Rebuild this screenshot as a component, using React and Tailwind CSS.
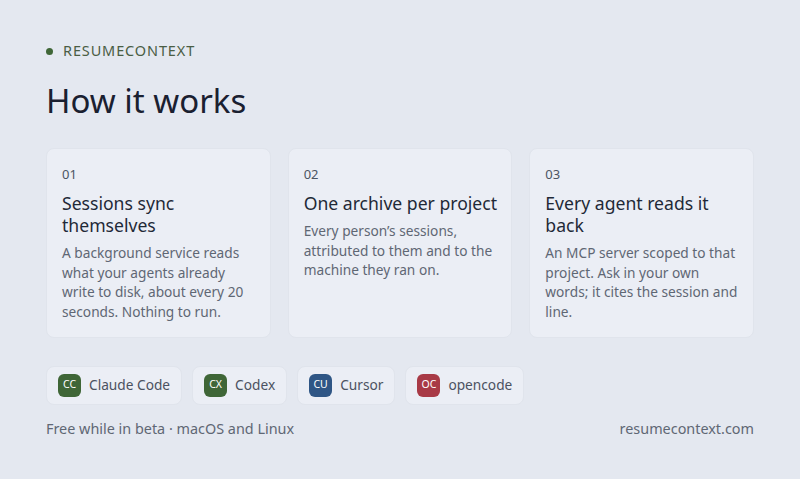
const steps = [
  {
    n: '01',
    title: 'Sessions sync themselves',
    body: 'A background service reads what your agents already write to disk, about every 20 seconds. Nothing to run.',
  },
  {
    n: '02',
    title: 'One archive per project',
    body: 'Every person\u2019s sessions, attributed to them and to the machine they ran on.',
  },
  {
    n: '03',
    title: 'Every agent reads it back',
    body: 'An MCP server scoped to that project. Ask in your own words; it cites the session and line.',
  },
]

const agents = [
  { code: 'CC', name: 'Claude Code', color: 'bg-[#3f6637]' },
  { code: 'CX', name: 'Codex', color: 'bg-[#3f6637]' },
  { code: 'CU', name: 'Cursor', color: 'bg-[#2f5685]' },
  { code: 'OC', name: 'opencode', color: 'bg-[#a83a46]' },
]

function StepCard({ n, title, body }) {
  return (
    <div className="bg-[#ebeef5] border border-[#e0e4ec] rounded-lg pl-[15px] pr-[13px] pt-[15px] pb-[15px]">
      <div className="text-[13px] leading-5 text-[#4b5563]">{n}</div>
      <h3 className="mt-2 text-[17.6px] leading-[22px] text-[#1f2937]">{title}</h3>
      <p className="mt-[7px] text-[13.7px] leading-[19.7px] text-[#5f6774]">{body}</p>
    </div>
  )
}

function AgentChip({ code, name, color }) {
  return (
    <div className="flex items-center gap-2 bg-[#ebeef5] border border-[#e0e4ec] rounded-lg px-[11px] h-[39px]">
      <span className={`${color} w-[23px] h-[23px] rounded-md flex items-center justify-center text-[10.5px] text-white`}>
        {code}
      </span>
      <span className="text-[13.7px] text-[#4b5261]">{name}</span>
    </div>
  )
}

export default function App() {
  return (
    <div
      className="min-h-screen w-full bg-[#e4e8f0] px-[46px] pt-[41px]"
      style={{ fontFamily: '"Noto Sans", "Open Sans", sans-serif' }}
    >
      {/* eyebrow */}
      <div className="flex items-center gap-[10px] h-5">
        <span className="w-[7px] h-[7px] rounded-full bg-[#3f6637]" />
        <span className="text-[14.5px] tracking-[0.06em] text-[#4a5d44]">RESUMECONTEXT</span>
      </div>

      <h1 className="mt-5 text-[33px] leading-10 text-[#1a2030]">How it works</h1>

      <div className="mt-[27px] grid grid-cols-3 gap-[17px] w-[708px]">
        {steps.map((s) => (
          <StepCard key={s.n} {...s} />
        ))}
      </div>

      <div className="mt-7 flex gap-[10px]">
        {agents.map((a) => (
          <AgentChip key={a.code} {...a} />
        ))}
      </div>

      <div className="mt-[14px] w-[708px] flex justify-between text-[14.4px] leading-5 text-[#5f6774]">
        <span>Free while in beta · macOS and Linux</span>
        <span>resumecontext.com</span>
      </div>
    </div>
  )
}
